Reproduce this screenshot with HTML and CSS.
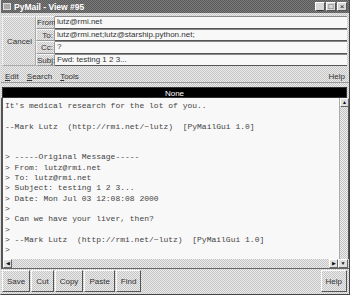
FILE: index.html
```html
<!DOCTYPE html>
<html lang="en">

<head>
    <meta charset="UTF-8">
    <title>PyMail - View #95</title>
    <link rel="stylesheet" href="styles.css">
</head>

<body>

    <div class="window">
        <div class="titlebar">
            <span class="app-icon"></span>
            <span class="title">PyMail - View #95</span>
            <div class="win-btns">
                <span class="win-btn">_</span>
                <span class="win-btn">&#9633;</span>
                <span class="win-btn">&#215;</span>
            </div>
        </div>

        <div class="header">
            <button class="tk-btn cancel">Cancel</button>
            <div class="fields">
                <div class="field-row">
                    <span class="field-label">From:</span>
                    <span class="field-entry">lutz@rmi.net</span>
                </div>
                <div class="field-row">
                    <span class="field-label">To:</span>
                    <span class="field-entry">lutz@rmi.net;lutz@starship.python.net;</span>
                </div>
                <div class="field-row">
                    <span class="field-label">Cc:</span>
                    <span class="field-entry">?</span>
                </div>
                <div class="field-row">
                    <span class="field-label">Subj:</span>
                    <span class="field-entry">Fwd: testing 1 2 3...</span>
                </div>
            </div>
        </div>

        <div class="menubar">
            <span class="menu"><u>E</u>dit</span>
            <span class="menu"><u>S</u>earch</span>
            <span class="menu"><u>T</u>ools</span>
            <span class="menu help">Help</span>
        </div>

        <div class="status">None</div>

        <div class="text-pane">
            <pre class="mail-body">It's medical research for the lot of you..

--Mark Lutz  (http://rmi.net/~lutz)  [PyMailGui 1.0]


&gt; -----Original Message-----
&gt; From: lutz@rmi.net
&gt; To: lutz@rmi.net
&gt; Subject: testing 1 2 3...
&gt; Date: Mon Jul 03 12:08:08 2000
&gt;
&gt; Can we have your liver, then?
&gt;
&gt; --Mark Lutz  (http://rmi.net/~lutz)  [PyMailGui 1.0]
&gt;</pre>
            <div class="vscroll">
                <span class="arrow up">&#9650;</span>
            </div>
        </div>

        <div class="hscroll">
            <span class="arrow left">&#9664;</span>
            <span class="track"></span>
            <span class="arrow right">&#9654;</span>
            <span class="arrow down">&#9660;</span>
        </div>

        <div class="toolbar">
            <button class="tk-btn">Save</button>
            <button class="tk-btn">Cut</button>
            <button class="tk-btn">Copy</button>
            <button class="tk-btn">Paste</button>
            <button class="tk-btn">Find</button>
            <button class="tk-btn help-btn">Help</button>
        </div>
    </div>

</body>

</html>
```

FILE: styles.css
```css
* {
    box-sizing: border-box;
    margin: 0;
    padding: 0;
}

body {
    width: 350px;
    height: 295px;
    overflow: hidden;
    font-family: 'Liberation Sans', Arial, sans-serif;
    font-size: 8px;
    color: #333;
    background: #fff;
}

.window {
    width: 350px;
    height: 295px;
    display: flex;
    flex-direction: column;
    border-right: 1px solid #444;
    border-bottom: 1px solid #444;
    border-left: 1px solid #ddd;
    background: repeating-conic-gradient(#c4c4c4 0 25%, #ececec 0 50%) 0 0 / 2px 2px;
}

/* title bar */
.titlebar {
    height: 13px;
    display: flex;
    align-items: center;
    padding: 0 2px;
    background: repeating-conic-gradient(#5a5a5a 0 25%, #7a7a7a 0 50%) 0 0 / 2px 2px;
    color: #fff;
}

.app-icon {
    width: 8px;
    height: 7px;
    margin-right: 3px;
    background: #aaa;
    border: 1px solid #ddd;
}

.title {
    font-weight: bold;
    font-size: 8.5px;
    flex: 1;
}

.win-btns {
    display: flex;
    gap: 1px;
}

.win-btn {
    width: 10px;
    height: 9px;
    background: #d8d8d8;
    border: 1px solid;
    border-color: #fff #555 #555 #fff;
    color: #111;
    font-size: 8px;
    line-height: 7px;
    text-align: center;
}

/* header fields */
.header {
    display: flex;
    padding: 3px 2px 2px 1px;
}

.header .cancel {
    width: 34px;
    height: auto;
    margin-right: 0;
    border-color: #f0f0f0 #aaa #aaa #f0f0f0;
}

.fields {
    flex: 1;
    display: flex;
    flex-direction: column;
}

.field-row {
    display: flex;
    height: 12.5px;
}

.field-label {
    width: 19px;
    text-align: right;
    padding-right: 1px;
    line-height: 12px;
    border: 1px solid;
    border-color: #f4f4f4 #999 #999 #f4f4f4;
}

.field-entry {
    flex: 1;
    background: #f8f8f8;
    border-bottom: 1px solid #555;
    border-top: 1px solid #888;
    padding-left: 2px;
    line-height: 10px;
}

/* menu */
.menubar {
    display: flex;
    height: 15px;
    align-items: center;
    padding: 3px 4px 0 4px;
    gap: 8px;
    margin-bottom: 4px;
    border-bottom: 1px solid #999;
}

.menu u {
    text-decoration: underline;
}

.help {
    margin-left: auto;
}

.status {
    height: 11px;
    background: #000;
    color: #fff;
    text-align: center;
    line-height: 11px;
    margin: 0 2px 0 1px;
    border: 1px solid #333;
}

/* message text */
.text-pane {
    flex: 1;
    display: flex;
    min-height: 0;
    border-left: 2px solid #555;
}

.mail-body {
    flex: 1;
    background: #f8f8f8;
    font-family: 'Liberation Mono', 'Courier New', monospace;
    font-size: 8px;
    line-height: 10.3px;
    color: #444;
    padding: 3px 0 0 2px;
    overflow: hidden;
}

.vscroll {
    width: 10px;
    border-left: 1px solid #aaa;
    border-right: 1px solid #555;
}

.arrow {
    display: block;
    width: 9px;
    height: 9px;
    background: #e0e0e0;
    border: 1px solid;
    border-color: #fff #666 #666 #fff;
    font-size: 5px;
    line-height: 7px;
    text-align: center;
    color: #111;
}

.hscroll {
    display: flex;
    height: 9px;
    border-left: 2px solid #555;
}

.track {
    flex: 1;
}

.hscroll .arrow {
    flex: none;
}

.hscroll .down {
    width: 10px;
    margin-right: 1px;
}

/* bottom buttons */
.toolbar {
    display: flex;
    padding: 1px 2px 2px 1px;
    border-top: 1px solid #666;
    height: 26px;
}

.tk-btn {
    font-family: 'Liberation Sans', Arial, sans-serif;
    font-size: 8px;
    color: #333;
    background: transparent;
    border: 1px solid;
    border-color: #fafafa #555 #555 #fafafa;
    padding: 0 4px;
    height: 22px;
    margin-right: 1px;
}

.help-btn {
    margin-left: auto;
    margin-right: 0;
}
```
